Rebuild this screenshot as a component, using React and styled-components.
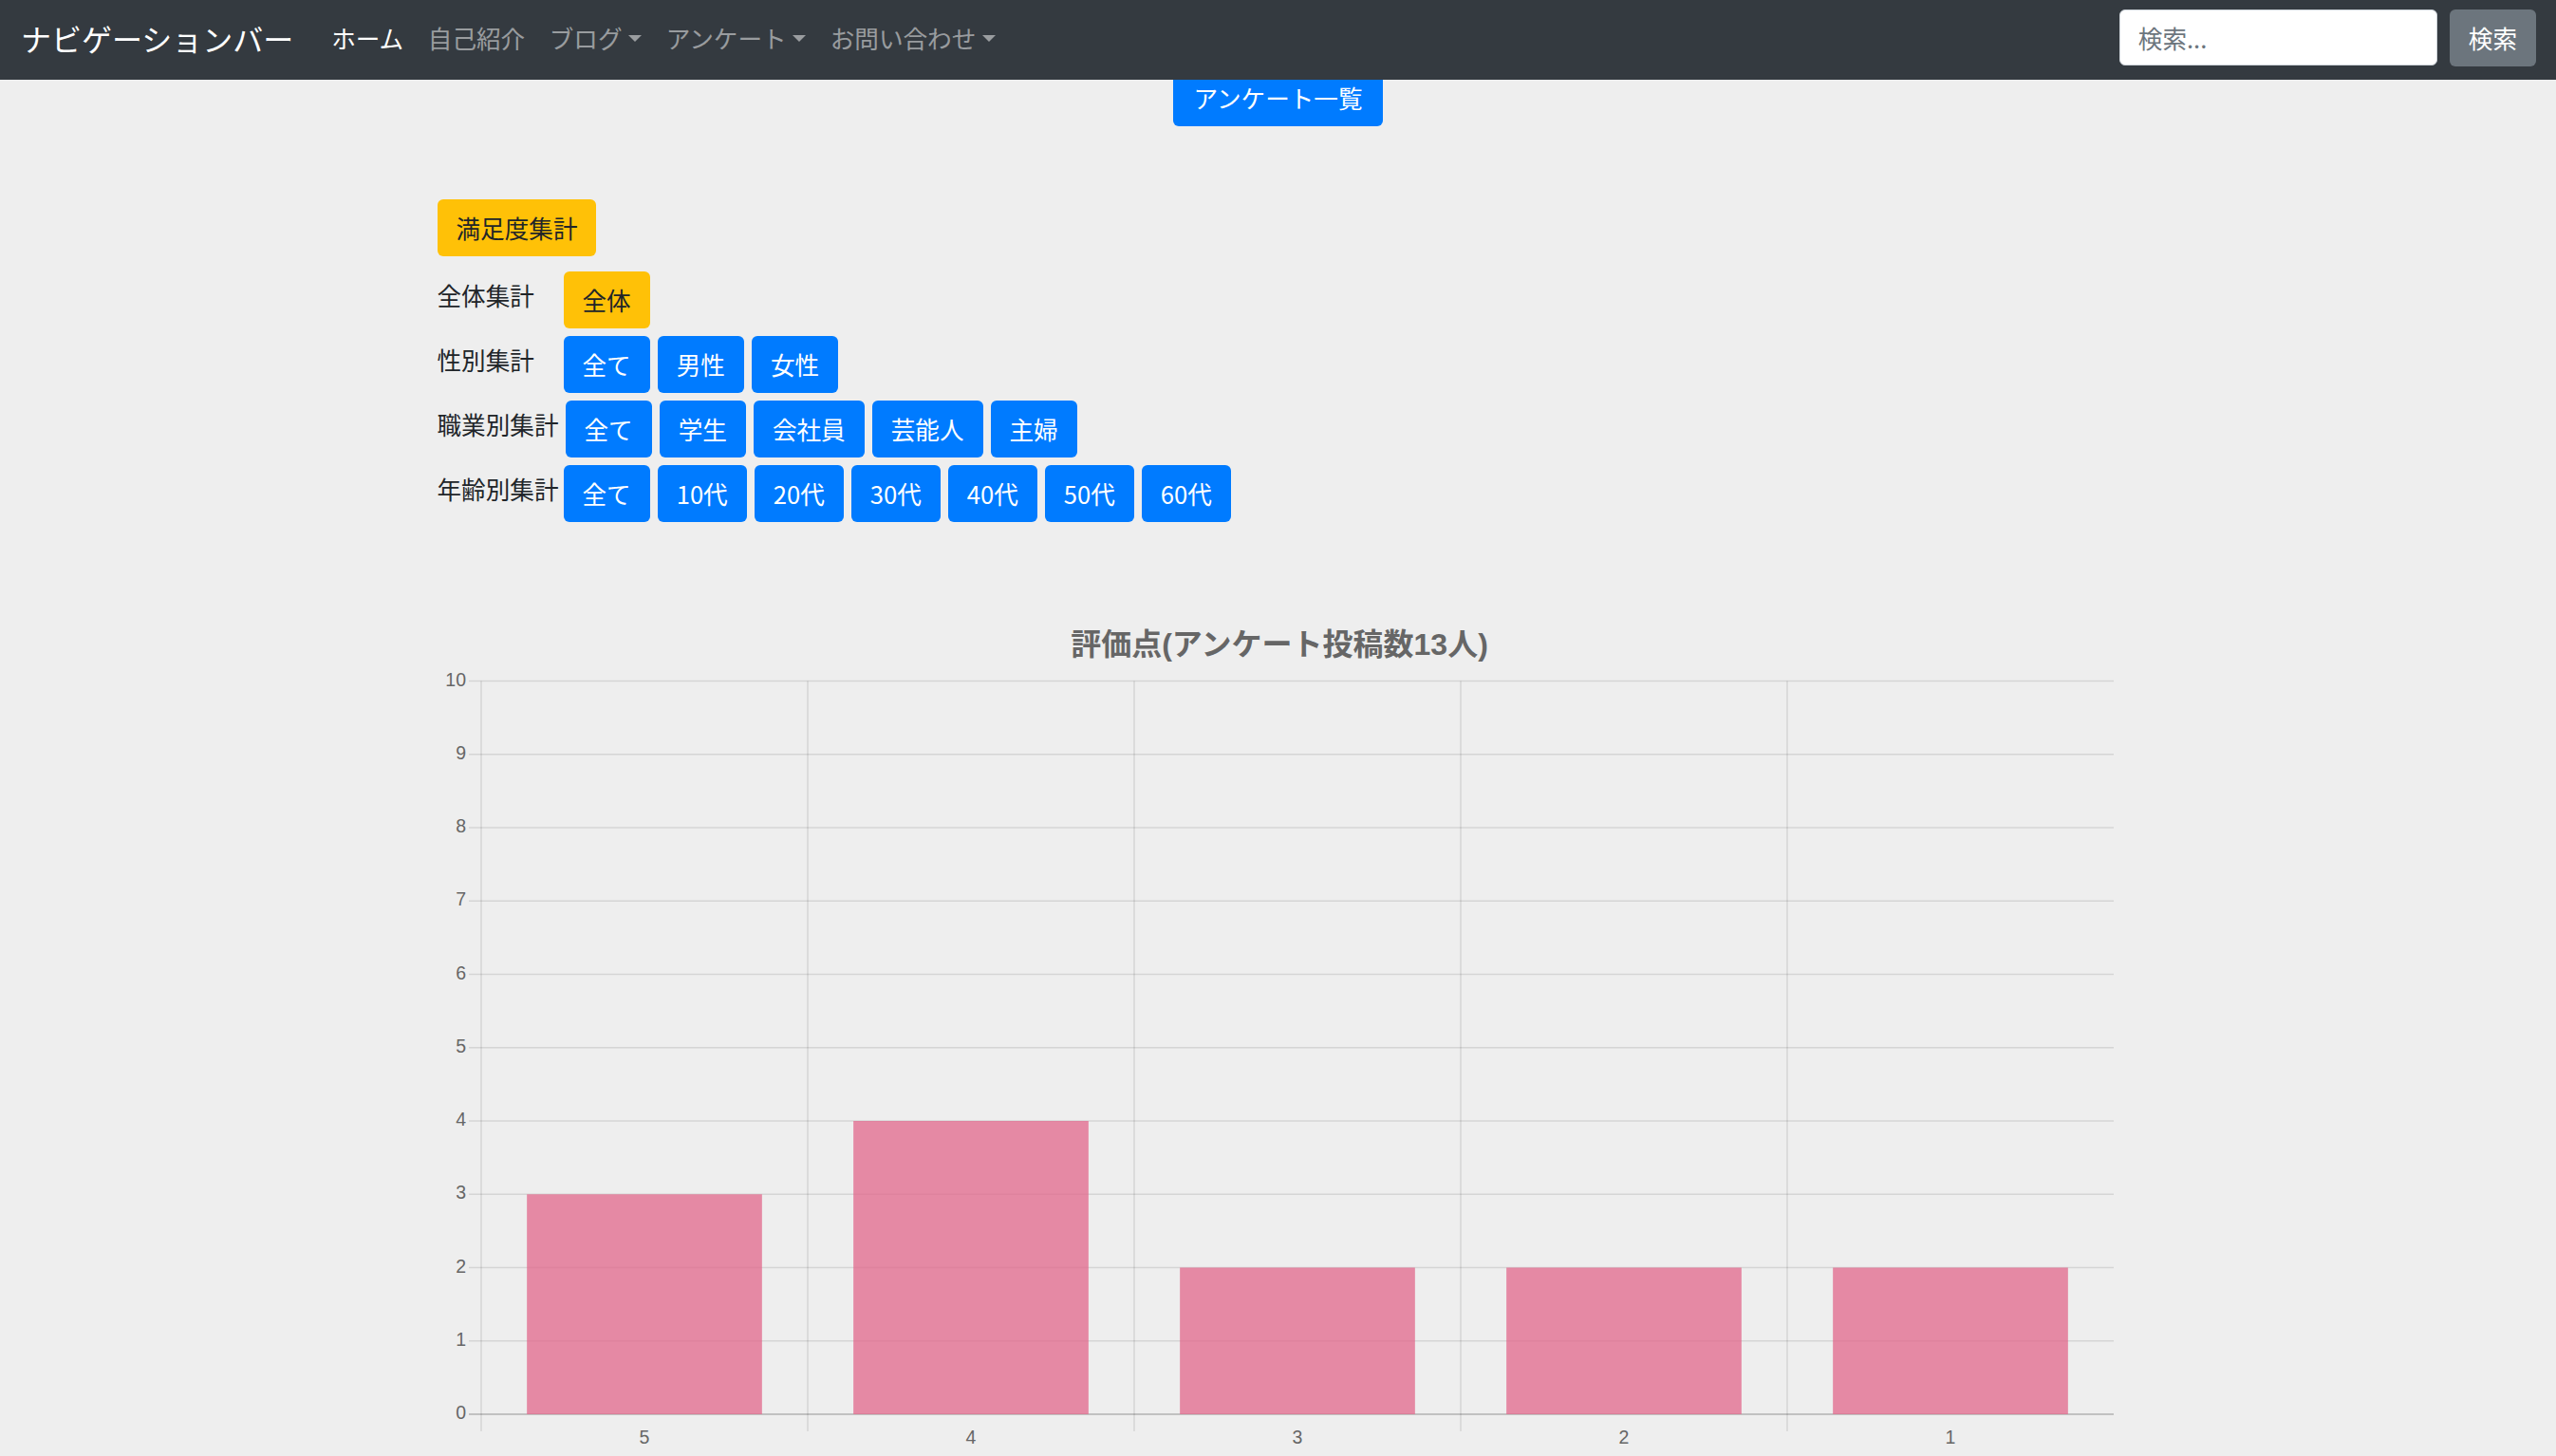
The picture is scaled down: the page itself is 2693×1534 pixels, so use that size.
import React from 'react'
import styled, { createGlobalStyle } from 'styled-components'

const GlobalStyle = createGlobalStyle`
  html, body {
    margin: 0;
    padding: 0;
    background: #eeeeee;
    font-family: "Noto Sans CJK JP", "Noto Sans", sans-serif;
    color: #212529;
  }
`

const Page = styled.div`
  min-height: 1534px;
  background: #eeeeee;
`

const Navbar = styled.nav`
  position: relative;
  z-index: 2;
  height: 84px;
  box-sizing: border-box;
  padding: 0 21px 5px 22px;
  background: #343a40;
  display: flex;
  align-items: center;
`

const Brand = styled.div`
  font-size: 32px;
  color: #fff;
  margin-right: 27px;
  white-space: nowrap;
`

const NavList = styled.div`
  display: flex;
  align-items: center;
  flex: 1;
`

const NavLink = styled.div`
  font-size: 25.6px;
  padding: 0 12.8px;
  color: ${p => (p.$active ? '#fff' : 'rgba(255,255,255,0.5)')};
  display: flex;
  align-items: center;
  white-space: nowrap;

  &::after {
    content: ${p => (p.$dropdown ? "''" : 'none')};
    display: inline-block;
    margin-left: 6.5px;
    border-top: 7.5px solid rgba(255,255,255,0.5);
    border-left: 7.5px solid transparent;
    border-right: 7.5px solid transparent;
    margin-top: 2px;
  }
`

const SearchForm = styled.form`
  display: flex;
  align-items: center;
  gap: 13px;
`

const SearchInput = styled.input`
  width: 335px;
  height: 59px;
  box-sizing: border-box;
  border: 1px solid #ced4da;
  border-radius: 6px;
  padding: 0 19px;
  font-size: 25.6px;
  font-family: inherit;
  color: #495057;
  background: #fff;
  outline: none;

  &::placeholder {
    color: #6c757d;
  }
`

const Button = styled.button`
  height: ${p => p.$h || 60}px;
  box-sizing: border-box;
  padding: 0 ${p => p.$px || 20}px;
  border: none;
  border-radius: 6px;
  font-family: inherit;
  font-size: 25.6px;
  line-height: 1;
  white-space: nowrap;
  display: inline-flex;
  align-items: center;
  justify-content: center;
  cursor: pointer;
  background: ${p =>
    p.$variant === 'warning' ? '#ffc107' : p.$variant === 'secondary' ? '#6c757d' : '#007bff'};
  color: ${p => (p.$variant === 'warning' ? '#212529' : '#fff')};
`

const Main = styled.main`
  width: 1772px;
  margin: -11px auto 0;
  position: relative;
  z-index: 1;
`

const TopRow = styled.div`
  display: flex;
  justify-content: center;
`

const FilterBlock = styled.section`
  margin-top: 77px;
  display: flex;
  flex-direction: column;
  align-items: flex-start;
  gap: 8px;
`

const SummaryRow = styled.div`
  margin-bottom: 8px;
`

const Row = styled.div`
  display: flex;
  align-items: flex-start;
`

const RowLabel = styled.div`
  width: 128px;
  margin-right: ${p => p.$mr || 5}px;
  font-size: 25.6px;
  line-height: 38px;
  padding-top: 6px;
  white-space: nowrap;
`

const Buttons = styled.div`
  display: flex;
  gap: 8px;
`

const ChartWrap = styled.section`
  margin-top: 90px;
`

const ChartSvg = styled.svg`
  display: block;
  width: 1770px;
  height: 900px;
  font-family: "Liberation Sans", "Noto Sans CJK JP", sans-serif;
`

const bars = [
  { label: '5', value: 3 },
  { label: '4', value: 4 },
  { label: '3', value: 2 },
  { label: '2', value: 2 },
  { label: '1', value: 2 },
]

const BarChart = () => {
  const left = 46
  const right = 1766
  const zeroY = 850
  const unit = 77.25
  const cat = (right - left) / bars.length
  const barW = cat * 0.72
  const y = v => zeroY - unit * v
  const ticks = Array.from({ length: 11 }, (_, i) => i)

  return (
    <ChartSvg viewBox="0 0 1770 900">
      <text x={887} y={42} textAnchor="middle" dominantBaseline="middle" fontSize="32" fontWeight="bold" fill="#666">
        評価点(アンケート投稿数13人)
      </text>
      {ticks.map(t => (
        <g key={t}>
          <line x1={33} x2={right} y1={y(t)} y2={y(t)} stroke={t === 0 ? 'rgba(0,0,0,0.25)' : 'rgba(0,0,0,0.1)'} strokeWidth="1.6" />
          <text x={30} y={y(t)} textAnchor="end" dominantBaseline="middle" fontSize="19.5" fill="#666">{t}</text>
        </g>
      ))}
      {Array.from({ length: bars.length }, (_, i) => (
        <line key={i} x1={left + cat * i} x2={left + cat * i} y1={y(10)} y2={868} stroke="rgba(0,0,0,0.1)" strokeWidth="1.6" />
      ))}
      {bars.map((b, i) => {
        const cx = left + cat * i + cat / 2
        return (
          <g key={b.label}>
            <rect x={cx - barW / 2} y={y(b.value)} width={barW} height={unit * b.value} fill="rgba(226,103,139,0.75)" />
            <text x={cx} y={876} textAnchor="middle" dominantBaseline="middle" fontSize="19.5" fill="#666">{b.label}</text>
          </g>
        )
      })}
    </ChartSvg>
  )
}

const App = () => {
  return (
    <Page>
      <GlobalStyle />
      <Navbar>
        <Brand>ナビゲーションバー</Brand>
        <NavList>
          <NavLink $active>ホーム</NavLink>
          <NavLink>自己紹介</NavLink>
          <NavLink $dropdown>ブログ</NavLink>
          <NavLink $dropdown>アンケート</NavLink>
          <NavLink $dropdown>お問い合わせ</NavLink>
        </NavList>
        <SearchForm onSubmit={e => e.preventDefault()}>
          <SearchInput placeholder="検索..." />
          <Button $variant="secondary" $h={60} $px={20}>検索</Button>
        </SearchForm>
      </Navbar>
      <Main>
        <TopRow>
          <Button $h={60} $px={21}>アンケート一覧</Button>
        </TopRow>
        <FilterBlock>
          <SummaryRow>
            <Button $variant="warning">満足度集計</Button>
          </SummaryRow>
          <Row>
            <RowLabel>全体集計</RowLabel>
            <Buttons>
              <Button $variant="warning">全体</Button>
            </Buttons>
          </Row>
          <Row>
            <RowLabel>性別集計</RowLabel>
            <Buttons>
              {['全て', '男性', '女性'].map(t => <Button key={t}>{t}</Button>)}
            </Buttons>
          </Row>
          <Row>
            <RowLabel $mr={7}>職業別集計</RowLabel>
            <Buttons>
              {['全て', '学生', '会社員', '芸能人', '主婦'].map(t => <Button key={t}>{t}</Button>)}
            </Buttons>
          </Row>
          <Row>
            <RowLabel>年齢別集計</RowLabel>
            <Buttons>
              {['全て', '10代', '20代', '30代', '40代', '50代', '60代'].map(t => <Button key={t}>{t}</Button>)}
            </Buttons>
          </Row>
        </FilterBlock>
        <ChartWrap>
          <BarChart />
        </ChartWrap>
      </Main>
    </Page>
  )
}

export default App
